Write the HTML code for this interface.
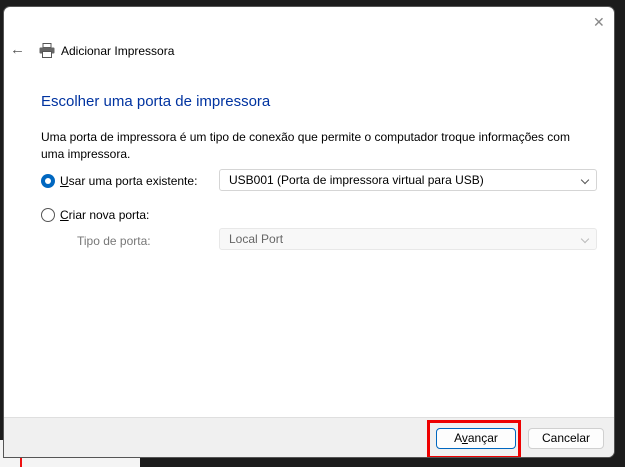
<!DOCTYPE html>
<html><head><style>
*{margin:0;padding:0;box-sizing:border-box}
body{width:625px;height:467px;background:#1c1c1c;position:relative;overflow:hidden;font-family:"Liberation Sans",sans-serif;font-size:12px;color:#000}
.a{position:absolute}
.win{left:3px;top:6px;width:612px;height:452px;background:#fff;border-radius:7px 7px 7px 0;overflow:hidden;border:1px solid #555}
.foot{left:0;top:410px;width:612px;height:42px;background:#f0f0f0;border-top:1px solid #dfdfdf}
.btn{border:1px solid #d0d0d0;background:#fdfdfd;border-radius:4px;text-align:center;line-height:18px;font-size:12px}
.dd{border:1px solid #d5d5d5;border-radius:3px;height:22px;line-height:20px;padding-left:9px;background:#fff}
.chev{right:8px;top:7px;width:6px;height:6px;border-right:1px solid #555;border-bottom:1px solid #555;transform:rotate(45deg)}
</style></head><body>
<div class="a" style="left:0;top:440px;width:140px;height:27px;background:#f4f4f4"></div>
<div class="a" style="left:20px;top:455px;width:2px;height:12px;background:#e11"></div>
<div class="a win">
  <div class="a" style="left:589px;top:7px;color:#888;font-size:14px">✕</div>
  <div class="a" style="left:6px;top:34px;font-size:15px;color:#555">&#8592;</div>
  <svg class="a" style="left:35px;top:36px" width="16" height="15" viewBox="0 0 16 15"><rect x="4" y="0.5" width="8" height="4" fill="#fff" stroke="#555"/><rect x="0.5" y="4.5" width="15" height="6" rx="1" fill="#666"/><rect x="3.5" y="8.5" width="9" height="6" fill="#fff" stroke="#555"/></svg>
  <div class="a" style="left:57px;top:37px;font-size:12px">Adicionar Impressora</div>
  <div class="a" style="left:37px;top:86px;font-size:15px;color:#0033a0">Escolher uma porta de impressora</div>
  <div class="a" style="left:37px;top:122px;width:540px;line-height:17px">Uma porta de impressora é um tipo de conexão que permite o computador troque informações com uma impressora.</div>
  <div class="a" style="left:37px;top:167px;width:14px;height:14px;border-radius:50%;background:#0067c0"><div class="a" style="left:4px;top:4px;width:6px;height:6px;border-radius:50%;background:#fff"></div></div>
  <div class="a" style="left:56px;top:167px"><u>U</u>sar uma porta existente:</div>
  <div class="a dd" style="left:215px;top:162px;width:378px">USB001 (Porta de impressora virtual para USB)<div class="a chev"></div></div>
  <div class="a" style="left:37px;top:201px;width:14px;height:14px;border-radius:50%;border:1px solid #555"></div>
  <div class="a" style="left:56px;top:201px"><u>C</u>riar nova porta:</div>
  <div class="a" style="left:73px;top:227px;color:#777">Tipo de porta:</div>
  <div class="a dd" style="left:215px;top:221px;width:378px;background:#f8f8f8;border-color:#e8e8e8;color:#666">Local Port<div class="a chev" style="border-color:#bbb"></div></div>
  <div class="a foot">
    <div class="a" style="left:423px;top:2px;width:94px;height:39px;border:3px solid #e00"></div>
    <div class="a btn" style="left:432px;top:10px;width:80px;height:21px;border-color:#0067c0">A<u>v</u>ançar</div>
    <div class="a btn" style="left:524px;top:10px;width:76px;height:21px">Cancelar</div>
  </div>
</div>
</body></html>
